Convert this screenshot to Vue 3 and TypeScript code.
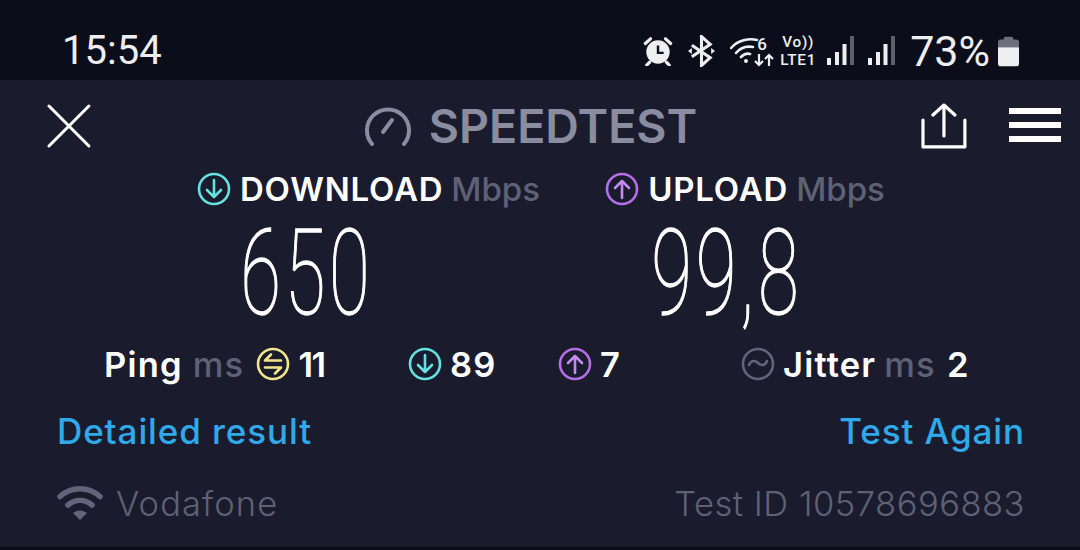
<script setup lang="ts">
const downloadPing = 89
const uploadPing = 7
</script>

<template>
  <div class="screen">
    <div class="status-bar">
      <span class="clock">15:54</span>
      <div class="status-icons">
        <svg class="alarm" width="30" height="30" viewBox="0 0 32 32">
          <circle cx="16" cy="17" r="12.500" fill="#eeeef0" />
          <path d="M16 10v8h6" fill="none" stroke="#0b0d1a" stroke-width="2.600" />
          <path d="M2.500 8 8 3M29.500 8 24 3M7 28l-3 3M25 28l3 3" stroke="#eeeef0" stroke-width="3.400" stroke-linecap="round" />
        </svg>
        <svg class="bluetooth" width="27" height="32" viewBox="0 0 28 32">
          <path d="M4 10l19 13-9 8V1l9 8L4 22" fill="none" stroke="#eeeef0" stroke-width="3.200" />
          <path d="M0 16l4-3v6zM28 16l-4-3v6z" fill="#eeeef0" />
        </svg>
        <div class="wifi-6">
          <svg width="30" height="28" viewBox="0 0 30 28">
            <path d="M1 11C8 3 19 1 27 3M6 16c5-6 12-7 17-6M11 20c3-3 6-4 9-3" fill="none" stroke="#eeeef0" stroke-width="2.600" stroke-linecap="round" />
            <circle cx="16" cy="24" r="2" fill="#eeeef0" />
          </svg>
          <span class="six">6</span>
          <svg class="arrows" width="20" height="14" viewBox="0 0 20 14">
            <path d="M5 1v11M1 8l4 4 4-4M15 13V2M11 6l4-4 4 4" fill="none" stroke="#eeeef0" stroke-width="2.200" />
          </svg>
        </div>
        <div class="volte"><span>Vo))</span><span>LTE1</span></div>
        <svg class="signal" width="27" height="30" viewBox="0 0 27 30">
          <rect x="0" y="22" width="4" height="7" fill="#eeeef0" />
          <rect x="8" y="16" width="4" height="13" fill="#eeeef0" />
          <rect x="15.500" y="8" width="4" height="21" fill="#eeeef0" />
          <rect x="23" y="0" width="4" height="29" fill="#5d5f6c" />
        </svg>
        <svg class="signal sim2" width="27" height="30" viewBox="0 0 27 30">
          <rect x="0" y="22" width="4" height="7" fill="#eeeef0" />
          <rect x="8" y="16" width="4" height="13" fill="#eeeef0" />
          <rect x="15.500" y="8" width="4" height="21" fill="#eeeef0" />
          <rect x="23" y="0" width="4" height="29" fill="#5d5f6c" />
        </svg>
        <span class="battery-text">73%</span>
        <svg class="battery" width="21" height="32" viewBox="0 0 22 32">
          <path d="M6 3q0-2 2-2h6q2 0 2 2v1h3q3 0 3 3v5H0V7q0-3 3-3h3z" fill="#6d6f7c" />
          <path d="M0 12h22v17q0 3-3 3H3q-3 0-3-3z" fill="#eeeef0" />
        </svg>
      </div>
    </div>

    <main class="result">
      <header class="top">
        <svg class="close" width="44" height="44" viewBox="0 0 44 44">
          <path d="M2 2l40 40M42 2L2 42" stroke="#fff" stroke-width="3" stroke-linecap="round" />
        </svg>
        <div class="logo">
          <svg width="46" height="40" viewBox="0 0 46 40">
            <path d="M7 38A21 21 0 1 1 39 38" fill="none" stroke="#8a8c9f" stroke-width="4" stroke-linecap="round" />
            <path d="M18 26l9-12" stroke="#8a8c9f" stroke-width="4" stroke-linecap="round" />
          </svg>
          <span>SPEEDTEST</span>
        </div>
        <svg class="share" width="46" height="46" viewBox="0 0 46 46">
          <path d="M2 17v27h42V17M23 33V2M12 12L23 2l11 10" fill="none" stroke="#fff" stroke-width="3.200" stroke-linecap="round" stroke-linejoin="round" />
        </svg>
        <div class="menu"><i></i><i></i><i></i></div>
      </header>

      <section class="speeds">
        <div class="speed download">
          <div class="speed-label">
            <svg class="dir" width="34" height="34" viewBox="0 0 34 34">
              <circle cx="17" cy="17" r="15" fill="none" stroke="#64e2e2" stroke-width="2.600" />
              <path d="M17 8v17M10 18l7 7 7-7" fill="none" stroke="#64e2e2" stroke-width="2.600" stroke-linecap="round" stroke-linejoin="round" />
            </svg>
            <b>DOWNLOAD</b>
            <span>Mbps</span>
          </div>
          <div class="value">650</div>
        </div>
        <div class="speed upload">
          <div class="speed-label">
            <svg class="dir" width="34" height="34" viewBox="0 0 34 34">
              <circle cx="17" cy="17" r="15" fill="none" stroke="#b56fe6" stroke-width="2.600" />
              <path d="M17 26V9M10 16l7-7 7 7" fill="none" stroke="#c58af0" stroke-width="2.600" stroke-linecap="round" stroke-linejoin="round" />
            </svg>
            <b>UPLOAD</b>
            <span>Mbps</span>
          </div>
          <div class="value">99,8</div>
        </div>
      </section>

      <section class="stats">
        <div class="stat ping">
          <b>Ping</b>
          <span class="unit">ms</span>
          <svg width="34" height="34" viewBox="0 0 34 34">
            <circle cx="17" cy="17" r="15" fill="none" stroke="#f4e58a" stroke-width="2.600" />
            <path d="M25 13.500H9l6-6M9 20.500h16l-6 6" fill="none" stroke="#f4e58a" stroke-width="2.600" stroke-linecap="round" stroke-linejoin="round" />
          </svg>
          <b class="ping-val">11</b>
        </div>
        <div class="stat dl">
          <svg width="34" height="34" viewBox="0 0 34 34">
            <circle cx="17" cy="17" r="15" fill="none" stroke="#64e2e2" stroke-width="2.600" />
            <path d="M17 8v17M10 18l7 7 7-7" fill="none" stroke="#64e2e2" stroke-width="2.600" stroke-linecap="round" stroke-linejoin="round" />
          </svg>
          <b>{{ downloadPing }}</b>
        </div>
        <div class="stat ul">
          <svg width="34" height="34" viewBox="0 0 34 34">
            <circle cx="17" cy="17" r="15" fill="none" stroke="#b56fe6" stroke-width="2.600" />
            <path d="M17 26V9M10 16l7-7 7 7" fill="none" stroke="#c58af0" stroke-width="2.600" stroke-linecap="round" stroke-linejoin="round" />
          </svg>
          <b>{{ uploadPing }}</b>
        </div>
        <div class="stat jitter">
          <svg width="34" height="34" viewBox="0 0 34 34">
            <circle cx="17" cy="17" r="15" fill="none" stroke="#62647a" stroke-width="2.600" />
            <path d="M8 18c2-5 6-5 9-2s7 3 9-2" fill="none" stroke="#62647a" stroke-width="2.600" stroke-linecap="round" />
          </svg>
          <b>Jitter</b>
          <span class="unit">ms</span>
          <b class="jitter-val">2</b>
        </div>
      </section>

      <div class="links">
        <a>Detailed result</a>
        <a>Test Again</a>
      </div>

      <footer class="meta">
        <div class="carrier">
          <svg width="46" height="36" viewBox="0 0 46 36">
            <path d="M3 11.500C14 1 32 1 43 11.500M11 20c7.500-6 16.500-6 24 0" fill="none" stroke="#62647a" stroke-width="5.500" stroke-linecap="round" />
            <path d="M16 28c4-3.500 10-3.500 14 0l-7 7z" fill="#62647a" />
          </svg>
          <span>Vodafone</span>
        </div>
        <span class="test-id">Test ID 10578696883</span>
      </footer>
    </main>
    <div class="bottom-edge"></div>
  </div>
</template>

<style>
html,
body {
  margin: 0;
  background: #1a1c2e;
}
</style>

<style scoped>
.screen {
  width: 1080px;
  height: 550px;
  overflow: hidden;
  display: flex;
  flex-direction: column;
  background: #1a1c2e;
  font-family: Inter, "Open Sans", sans-serif;
  color: #fff;
}

.status-bar {
  height: 80px;
  flex: none;
  display: flex;
  align-items: center;
  justify-content: space-between;
  padding: 21px 61px 0 62px;
  box-sizing: border-box;
  background: #0b0d1a;
  color: #eeeef0;
}

.clock {
  font: 400 40px Roboto, sans-serif;
}

.status-icons {
  display: flex;
  align-items: center;
}

.bluetooth {
  margin-left: 15px;
}

.wifi-6 {
  position: relative;
  width: 44px;
  height: 30px;
  margin-left: 15px;
}

.wifi-6 svg:first-child {
  position: absolute;
  left: 0;
  top: 1px;
}

.six {
  position: absolute;
  left: 27px;
  top: -2px;
  font: 500 17px Roboto, sans-serif;
}

.arrows {
  position: absolute;
  right: 0;
  bottom: -1px;
}

.volte {
  display: flex;
  flex-direction: column;
  align-items: center;
  width: 38px;
  margin-left: 5px;
  font: 500 15.300px/18px Roboto, sans-serif;
  letter-spacing: 0.700px;
}

.signal {
  margin-left: 10px;
}

.signal.sim2 {
  margin-left: 14px;
}

.battery-text {
  margin-left: 15px;
  font: 400 43px Roboto, sans-serif;
}

.battery {
  margin-left: 8px;
}

.result {
  flex: 1;
  padding: 0 19px 0 47px;
  min-height: 0;
}

.top {
  height: 67px;
  margin-top: 24px;
  display: flex;
  align-items: flex-start;
}

.logo {
  width: 832px;
  box-sizing: border-box;
  padding-left: 50px;
  display: flex;
  justify-content: center;
  align-items: center;
  gap: 18px;
  color: #8a8c9f;
  font-size: 46.500px;
  font-weight: 600;
  height: 44px;
}

.share {
  margin-top: -1px;
}

.menu {
  margin-left: 42px;
  margin-top: 4px;
  display: flex;
  flex-direction: column;
  gap: 8px;
}

.menu i {
  display: block;
  width: 52px;
  height: 6px;
  background: #fff;
}

.speeds {
  display: flex;
}

.speed {
  display: flex;
  flex-direction: column;
  align-items: center;
}

.download {
  margin-left: 151px;
  width: 341px;
}

.upload {
  margin-left: 68px;
  width: 276px;
}

.speed-label {
  display: flex;
  align-items: center;
  height: 36px;
  white-space: nowrap;
  font-size: 33px;
}

.speed-label b {
  margin-left: 9px;
  font-weight: 600;
  letter-spacing: 0.800px;
}

.speed-label span {
  margin-left: 8px;
  color: #5f6175;
  font-weight: 500;
}

.value {
  height: 100px;
  margin-top: 17px;
  font: 100 118px/100px Roboto, sans-serif;
  letter-spacing: 6px;
  -webkit-text-stroke: 1.300px #fff;
  transform: scaleX(0.63);
}

.download .value {
  margin-right: 124px;
}

.upload .value {
  margin-right: 36px;
}

.stats {
  display: flex;
  margin-top: 18px;
  font-size: 34.500px;
  letter-spacing: 1.200px;
  height: 44px;
  align-items: center;
}

.stat {
  display: flex;
  align-items: center;
  white-space: nowrap;
}

.stat b {
  font-weight: 600;
}

.stat svg + b {
  margin-left: 8px;
}

.unit {
  color: #5f6175;
  font-weight: 500;
  margin: 0 11px 0 8px;
}

.ping .unit {
  margin: 0 12px 0 10px;
}

.ping-val {
  letter-spacing: -1.500px;
}

.ping {
  margin-left: 57px;
  width: 304px;
}

.dl {
  width: 150px;
}

.ul {
  width: 183px;
}

.bottom-edge {
  height: 3px;
  flex: none;
  background: #0b0d1a;
}

.links {
  display: flex;
  justify-content: space-between;
  margin: 23px 36px 0 10px;
  color: #2fa9ea;
  font-size: 35px;
  font-weight: 500;
  letter-spacing: 0.900px;
  height: 44px;
  align-items: center;
}

.meta {
  display: flex;
  justify-content: space-between;
  align-items: center;
  margin: 28px 36px 0 10px;
  height: 44px;
  color: #5f6175;
  font-size: 34.500px;
  font-weight: 300;
}

.carrier {
  display: flex;
  align-items: center;
  gap: 13px;
  letter-spacing: 1.100px;
}

.test-id {
  letter-spacing: 0.500px;
}
</style>
